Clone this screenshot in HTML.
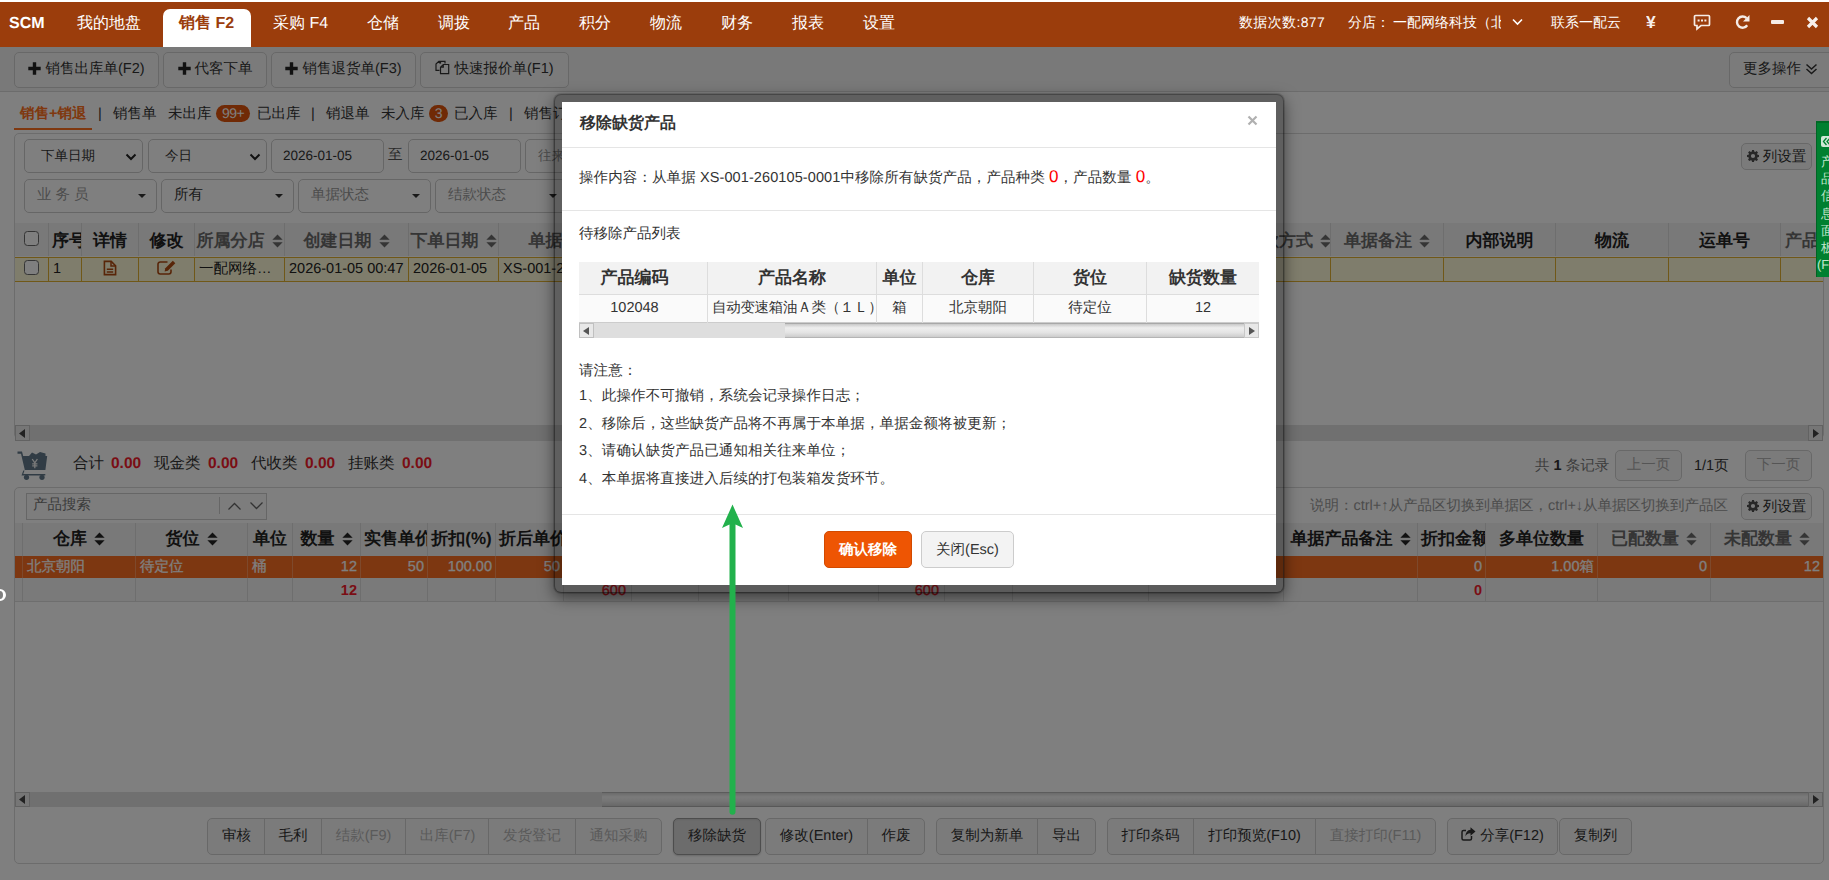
<!DOCTYPE html>
<html lang="zh">
<head>
<meta charset="utf-8">
<title>SCM</title>
<style>
*{box-sizing:border-box;margin:0;padding:0}
html,body{width:1829px;height:880px;overflow:hidden;background:#fff}
body{font-family:"Liberation Sans",sans-serif;font-size:14.500px;color:#333;position:relative;text-rendering:geometricPrecision}
.abs{position:absolute}
.t{position:absolute;white-space:nowrap;line-height:20px}
#hdr{position:absolute;left:0;top:0;width:1829px;height:47px;background:#9b3d0c;border-top:2px solid #fff;z-index:30}
#hdr .t{color:#fff;font-size:16px;line-height:20px}
#seltab{position:absolute;left:163px;top:7px;width:88px;height:38px;background:#fff;border-radius:7px 7px 0 0}
#page{position:absolute;left:0;top:0;width:1829px;height:880px;background:#fff;z-index:1;overflow:hidden}
#overlay{position:absolute;left:0;top:0;width:1829px;height:880px;background:rgba(0,0,0,.5);z-index:20}
.btn{position:absolute;height:36px;line-height:33px;border:1px solid #d0d0d0;border-radius:5px;background:#f7f7f7;color:#333;font-size:14.500px;text-align:center;white-space:nowrap;overflow:hidden}
.ctl{position:absolute;height:34px;line-height:32px;border:1px solid #ccc;border-radius:5px;background:#fff;color:#333;font-size:13.500px;padding-left:16px;white-space:nowrap;overflow:hidden}
.badge{position:absolute;height:17px;line-height:17px;border-radius:9px;background:#e0550c;color:#fff;font-size:14px;text-align:center;letter-spacing:-.5px}
.th{position:absolute;text-align:center;font-weight:bold;font-size:17px;white-space:nowrap;overflow:hidden}
.td{position:absolute;font-size:14.500px;white-space:nowrap;overflow:hidden;color:#222}
.red{color:#f00;font-size:17px}
#modal{position:absolute;left:554px;top:94px;width:730px;height:499px;border:8px solid rgba(0,0,0,.25);border-radius:7px;background:#fff;background-clip:padding-box;z-index:40;box-shadow:0 0 0 1px rgba(0,0,0,.13),0 5px 15px rgba(0,0,0,.5)}
#green{position:absolute;left:1816px;top:121px;width:13px;height:156px;background:#008030;border-left:1.500px solid #006424;border-top:2px solid #006a26;z-index:35;color:#cfe;font-size:13px;line-height:19px;overflow:hidden}
</style>
</head>
<body>
<div id="page">
<div class="abs" style="left:0px;top:47px;width:1829px;height:44px;background:#f2f2f2"></div>
<div class="abs" style="left:0px;top:91px;width:1829px;height:1px;background:#d8d8d8"></div>
<div class="btn" style="left:14px;top:52px;width:145px;height:36px;line-height:33px;"><svg width="13" height="13" viewBox="0 0 13 13" style="vertical-align:-1.500px;margin-right:4px"><path d="M4.800 0.300h3.400v4.500h4.500v3.400H8.200v4.500H4.800V8.200H0.300V4.800H4.800z" fill="#222"/></svg>销售出库单(F2)</div>
<div class="btn" style="left:163px;top:52px;width:104px;height:36px;line-height:33px;"><svg width="13" height="13" viewBox="0 0 13 13" style="vertical-align:-1.500px;margin-right:4px"><path d="M4.800 0.300h3.400v4.500h4.500v3.400H8.200v4.500H4.800V8.200H0.300V4.800H4.800z" fill="#222"/></svg>代客下单</div>
<div class="btn" style="left:271px;top:52px;width:145px;height:36px;line-height:33px;"><svg width="13" height="13" viewBox="0 0 13 13" style="vertical-align:-1.500px;margin-right:4px"><path d="M4.800 0.300h3.400v4.500h4.500v3.400H8.200v4.500H4.800V8.200H0.300V4.800H4.800z" fill="#222"/></svg>销售退货单(F3)</div>
<div class="btn" style="left:420px;top:52px;width:149px;height:36px;line-height:33px;"><svg width="15" height="15" viewBox="0 0 15 15" style="vertical-align:-2px;margin-right:4px"><path d="M5.500 3.500V1.300h4.500l0 0v2.200M5.500 3.500L3.200 1.300M5.500 1.300H3.800L1 4v6.300h3.500" fill="none" stroke="#333" stroke-width="1.200"/><path d="M8.300 4.500h5.400v9.200H5.500V7.200zM8.300 4.500v2.700H5.500" fill="none" stroke="#333" stroke-width="1.200"/></svg>快速报价单(F1)</div>
<div class="btn" style="left:1729px;top:52px;width:112px;height:36px;line-height:33px;text-align:left;padding-left:13px">更多操作 <svg width="13" height="12" viewBox="0 0 13 12" style="vertical-align:-2px"><path d="M1.500 1.500L6.500 6L11.500 1.500M1.500 6L6.500 10.500L11.500 6" fill="none" stroke="#333" stroke-width="1.500"/></svg></div>
<div class="t" style="left:20px;top:104px;color:#ff7020;font-weight:bold">销售+销退</div>
<div class="abs" style="left:14px;top:128px;width:78px;height:2px;background:#ff7020"></div>
<div class="t" style="left:98px;top:104px;">|</div>
<div class="t" style="left:113px;top:104px;">销售单</div>
<div class="t" style="left:168px;top:104px;">未出库</div>
<div class="badge" style="left:216px;top:105px;width:34px">99+</div>
<div class="t" style="left:257px;top:104px;">已出库</div>
<div class="t" style="left:311px;top:104px;">|</div>
<div class="t" style="left:326px;top:104px;">销退单</div>
<div class="t" style="left:381px;top:104px;">未入库</div>
<div class="badge" style="left:429px;top:105px;width:19px">3</div>
<div class="t" style="left:454px;top:104px;">已入库</div>
<div class="t" style="left:509px;top:104px;">|</div>
<div class="t" style="left:524px;top:104px;">销售订单</div>
<div class="abs" style="left:14px;top:133px;width:1810px;height:306px;border:1px solid #d8d8d8;border-radius:5px;background:#fff"></div>
<div class="ctl" style="left:24px;top:139px;width:119px;">下单日期<svg class="abs" style="right:5px;top:13px" width="12" height="8" viewBox="0 0 12 8"><path d="M1.500 1.500L6 6L10.500 1.500" fill="none" stroke="#222" stroke-width="2"/></svg></div>
<div class="ctl" style="left:148px;top:139px;width:119px;">今日<svg class="abs" style="right:5px;top:13px" width="12" height="8" viewBox="0 0 12 8"><path d="M1.500 1.500L6 6L10.500 1.500" fill="none" stroke="#222" stroke-width="2"/></svg></div>
<div class="ctl" style="left:271px;top:139px;width:113px;padding-left:11px">2026-01-05</div>
<div class="t" style="left:388px;top:145px;color:#555">至</div>
<div class="ctl" style="left:408px;top:139px;width:113px;padding-left:11px">2026-01-05</div>
<div class="ctl" style="left:525px;top:139px;width:160px;padding-left:12px;color:#999">往来单位</div>
<div class="ctl" style="left:24px;top:179px;width:133px;color:#999;font-size:14.500px;padding-left:12px;line-height:30px">业 务 员<svg class="abs" style="right:10px;top:14px" width="8" height="4" viewBox="0 0 8 4"><path d="M0 0h8L4 4z" fill="#333"/></svg></div>
<div class="ctl" style="left:161px;top:179px;width:133px;font-size:14.500px;padding-left:12px;line-height:30px">所有<svg class="abs" style="right:10px;top:14px" width="8" height="4" viewBox="0 0 8 4"><path d="M0 0h8L4 4z" fill="#333"/></svg></div>
<div class="ctl" style="left:298px;top:179px;width:133px;color:#999;font-size:14.500px;padding-left:12px;line-height:30px">单据状态<svg class="abs" style="right:10px;top:14px" width="8" height="4" viewBox="0 0 8 4"><path d="M0 0h8L4 4z" fill="#333"/></svg></div>
<div class="ctl" style="left:435px;top:179px;width:133px;color:#999;font-size:14.500px;padding-left:12px;line-height:30px">结款状态<svg class="abs" style="right:10px;top:14px" width="8" height="4" viewBox="0 0 8 4"><path d="M0 0h8L4 4z" fill="#333"/></svg></div>
<div class="btn" style="left:1741px;top:143px;width:71px;height:27px;line-height:24px;line-height:26.500px;"><svg width="12" height="12" viewBox="0 0 16 16" style="vertical-align:-1px;margin-right:4px"><path fill="#505050" fill-rule="evenodd" d="M6.700 0h2.600l.4 2.100 1.300.55 1.800-1.200 1.850 1.850-1.200 1.800.55 1.300 2.100.4v2.600l-2.100.4-.55 1.300 1.200 1.800-1.850 1.850-1.800-1.200-1.300.55-.4 2.100H6.700l-.4-2.100-1.300-.55-1.800 1.200-1.850-1.850 1.200-1.800-.55-1.300L0 9.300V6.700l2.100-.4.55-1.300-1.200-1.800L3.300 1.350l1.800 1.200 1.300-.55zM8 5.200a2.800 2.800 0 1 0 0 5.600 2.800 2.800 0 0 0 0-5.600z"/></svg>列设置</div>
<div class="abs" style="left:15px;top:223px;width:1808px;height:33px;background:#f2f2f2"></div>
<div class="th" style="left:15px;top:223px;width:33px;height:33px;line-height:35px;color:#222;text-align:center;"><span style="position:relative;top:-2px"><span style="display:inline-block;width:15px;height:15px;border:1.500px solid #6a6a6a;border-radius:3.500px;background:#fff;vertical-align:-2px;margin-left:-1px"></span></span></div>
<div class="th" style="left:48px;top:223px;width:33px;height:33px;line-height:35px;color:#222;text-align:center;border-left:1px solid #ddd;text-align:left;padding-left:3px;">序号</div>
<div class="th" style="left:81px;top:223px;width:57px;height:33px;line-height:35px;color:#222;text-align:center;border-left:1px solid #ddd;">详情</div>
<div class="th" style="left:138px;top:223px;width:56px;height:33px;line-height:35px;color:#222;text-align:center;border-left:1px solid #ddd;">修改</div>
<div class="th" style="left:194px;top:223px;width:90px;height:33px;line-height:35px;color:#6a6a6a;text-align:center;border-left:1px solid #ddd;">所属分店<svg width="11" height="14" viewBox="0 0 9 13" preserveAspectRatio="none" style="vertical-align:-1.500px;margin-left:7px"><path d="M4.500 0.500L8.700 5.300H0.300zM4.500 12.500L0.300 7.700H8.700z" fill="#6a6a6a"/></svg></div>
<div class="th" style="left:284px;top:223px;width:124px;height:33px;line-height:35px;color:#6a6a6a;text-align:center;border-left:1px solid #ddd;">创建日期<svg width="11" height="14" viewBox="0 0 9 13" preserveAspectRatio="none" style="vertical-align:-1.500px;margin-left:7px"><path d="M4.500 0.500L8.700 5.300H0.300zM4.500 12.500L0.300 7.700H8.700z" fill="#6a6a6a"/></svg></div>
<div class="th" style="left:408px;top:223px;width:90px;height:33px;line-height:35px;color:#6a6a6a;text-align:center;border-left:1px solid #ddd;">下单日期<svg width="11" height="14" viewBox="0 0 9 13" preserveAspectRatio="none" style="vertical-align:-1.500px;margin-left:7px"><path d="M4.500 0.500L8.700 5.300H0.300zM4.500 12.500L0.300 7.700H8.700z" fill="#6a6a6a"/></svg></div>
<div class="th" style="left:498px;top:223px;width:146px;height:33px;line-height:35px;color:#6a6a6a;text-align:center;border-left:1px solid #ddd;">单据编号<svg width="11" height="14" viewBox="0 0 9 13" preserveAspectRatio="none" style="vertical-align:-1.500px;margin-left:7px"><path d="M4.500 0.500L8.700 5.300H0.300zM4.500 12.500L0.300 7.700H8.700z" fill="#6a6a6a"/></svg></div>
<div class="th" style="left:644px;top:223px;width:78px;height:33px;line-height:35px;color:#6a6a6a;text-align:center;border-left:1px solid #ddd;">往来单位<svg width="11" height="14" viewBox="0 0 9 13" preserveAspectRatio="none" style="vertical-align:-1.500px;margin-left:7px"><path d="M4.500 0.500L8.700 5.300H0.300zM4.500 12.500L0.300 7.700H8.700z" fill="#6a6a6a"/></svg></div>
<div class="th" style="left:722px;top:223px;width:100px;height:33px;line-height:35px;color:#222;text-align:center;border-left:1px solid #ddd;">金额<svg width="11" height="14" viewBox="0 0 9 13" preserveAspectRatio="none" style="vertical-align:-1.500px;margin-left:7px"><path d="M4.500 0.500L8.700 5.300H0.300zM4.500 12.500L0.300 7.700H8.700z" fill="#222"/></svg></div>
<div class="th" style="left:822px;top:223px;width:100px;height:33px;line-height:35px;color:#222;text-align:center;border-left:1px solid #ddd;">已收<svg width="11" height="14" viewBox="0 0 9 13" preserveAspectRatio="none" style="vertical-align:-1.500px;margin-left:7px"><path d="M4.500 0.500L8.700 5.300H0.300zM4.500 12.500L0.300 7.700H8.700z" fill="#222"/></svg></div>
<div class="th" style="left:922px;top:223px;width:100px;height:33px;line-height:35px;color:#222;text-align:center;border-left:1px solid #ddd;">未收<svg width="11" height="14" viewBox="0 0 9 13" preserveAspectRatio="none" style="vertical-align:-1.500px;margin-left:7px"><path d="M4.500 0.500L8.700 5.300H0.300zM4.500 12.500L0.300 7.700H8.700z" fill="#222"/></svg></div>
<div class="th" style="left:1022px;top:223px;width:100px;height:33px;line-height:35px;color:#222;text-align:center;border-left:1px solid #ddd;">状态<svg width="11" height="14" viewBox="0 0 9 13" preserveAspectRatio="none" style="vertical-align:-1.500px;margin-left:7px"><path d="M4.500 0.500L8.700 5.300H0.300zM4.500 12.500L0.300 7.700H8.700z" fill="#222"/></svg></div>
<div class="th" style="left:1122px;top:223px;width:122px;height:33px;line-height:35px;color:#222;text-align:center;border-left:1px solid #ddd;">业务员<svg width="11" height="14" viewBox="0 0 9 13" preserveAspectRatio="none" style="vertical-align:-1.500px;margin-left:7px"><path d="M4.500 0.500L8.700 5.300H0.300zM4.500 12.500L0.300 7.700H8.700z" fill="#222"/></svg></div>
<div class="th" style="left:1244px;top:223px;width:86px;height:33px;line-height:35px;color:#6a6a6a;text-align:center;border-left:1px solid #ddd;">收款方式<svg width="11" height="14" viewBox="0 0 9 13" preserveAspectRatio="none" style="vertical-align:-1.500px;margin-left:7px"><path d="M4.500 0.500L8.700 5.300H0.300zM4.500 12.500L0.300 7.700H8.700z" fill="#6a6a6a"/></svg></div>
<div class="th" style="left:1330px;top:223px;width:113px;height:33px;line-height:35px;color:#6a6a6a;text-align:center;border-left:1px solid #ddd;">单据备注<svg width="11" height="14" viewBox="0 0 9 13" preserveAspectRatio="none" style="vertical-align:-1.500px;margin-left:7px"><path d="M4.500 0.500L8.700 5.300H0.300zM4.500 12.500L0.300 7.700H8.700z" fill="#6a6a6a"/></svg></div>
<div class="th" style="left:1443px;top:223px;width:112px;height:33px;line-height:35px;color:#222;text-align:center;border-left:1px solid #ddd;">内部说明</div>
<div class="th" style="left:1555px;top:223px;width:113px;height:33px;line-height:35px;color:#222;text-align:center;border-left:1px solid #ddd;">物流</div>
<div class="th" style="left:1668px;top:223px;width:112px;height:33px;line-height:35px;color:#222;text-align:center;border-left:1px solid #ddd;">运单号</div>
<div class="th" style="left:1780px;top:223px;width:60px;height:33px;line-height:35px;color:#6a6a6a;text-align:center;border-left:1px solid #ddd;text-align:left;padding-left:4px;width:42px;">产品</div>
<div class="abs" style="left:15px;top:257px;width:1808px;height:25px;background:#fffbd9;border-top:1px solid #e0b030;border-bottom:1px solid #e0b030"></div>
<div class="td" style="left:15px;top:257px;width:33px;height:25px;line-height:25px;text-align:center;"><span style="display:inline-block;width:15px;height:15px;border:1.500px solid #6a6a6a;border-radius:3.500px;background:#fff;vertical-align:-2px;margin-left:-1px"></span></div>
<div class="td" style="left:48px;top:257px;width:33px;height:25px;line-height:25px;text-align:left;border-left:1px solid #e0b030;padding-left:4px;">1</div>
<div class="td" style="left:81px;top:257px;width:57px;height:25px;line-height:25px;text-align:center;border-left:1px solid #e0b030;"><svg width="14" height="16" viewBox="0 0 14 16" style="vertical-align:-3px"><path d="M1.400 1.400h6.800l4.400 4.400v8.800H1.400z" fill="none" stroke="#b04a10" stroke-width="1.600"/><path d="M8 1.400v4.600h4.600" fill="none" stroke="#b04a10" stroke-width="1.500"/><path d="M3.800 9.300h6.400M3.800 12h6.400" stroke="#b04a10" stroke-width="1.500"/></svg></div>
<div class="td" style="left:138px;top:257px;width:56px;height:25px;line-height:25px;text-align:center;border-left:1px solid #e0b030;"><svg width="19" height="15" viewBox="0 0 19 15" style="vertical-align:-2px"><path d="M14 9.500v2.300a2.200 2.200 0 0 1-2.200 2.200H3.200A2.200 2.200 0 0 1 1 11.800V4.200A2.200 2.200 0 0 1 3.200 2h7.300" fill="none" stroke="#b04a10" stroke-width="1.600"/><path d="M7.600 11.400l0.700-3.200L15.800 0.700l2.500 2.500L10.800 10.700z" fill="#b04a10"/></svg></div>
<div class="td" style="left:194px;top:257px;width:90px;height:25px;line-height:25px;text-align:left;border-left:1px solid #e0b030;padding-left:4px;">一配网络…</div>
<div class="td" style="left:284px;top:257px;width:124px;height:25px;line-height:25px;text-align:left;border-left:1px solid #e0b030;padding-left:4px;">2026-01-05 00:47</div>
<div class="td" style="left:408px;top:257px;width:90px;height:25px;line-height:25px;text-align:left;border-left:1px solid #e0b030;padding-left:4px;">2026-01-05</div>
<div class="td" style="left:498px;top:257px;width:146px;height:25px;line-height:25px;text-align:left;border-left:1px solid #e0b030;padding-left:4px;">XS-001-260105-0001</div>
<div class="td" style="left:644px;top:257px;width:78px;height:25px;line-height:25px;text-align:left;border-left:1px solid #e0b030;padding-left:4px;"></div>
<div class="td" style="left:722px;top:257px;width:100px;height:25px;line-height:25px;text-align:left;border-left:1px solid #e0b030;padding-left:4px;"></div>
<div class="td" style="left:822px;top:257px;width:100px;height:25px;line-height:25px;text-align:left;border-left:1px solid #e0b030;padding-left:4px;"></div>
<div class="td" style="left:922px;top:257px;width:100px;height:25px;line-height:25px;text-align:left;border-left:1px solid #e0b030;padding-left:4px;"></div>
<div class="td" style="left:1022px;top:257px;width:100px;height:25px;line-height:25px;text-align:left;border-left:1px solid #e0b030;padding-left:4px;"></div>
<div class="td" style="left:1122px;top:257px;width:122px;height:25px;line-height:25px;text-align:left;border-left:1px solid #e0b030;padding-left:4px;"></div>
<div class="td" style="left:1244px;top:257px;width:86px;height:25px;line-height:25px;text-align:left;border-left:1px solid #e0b030;padding-left:4px;"></div>
<div class="td" style="left:1330px;top:257px;width:113px;height:25px;line-height:25px;text-align:left;border-left:1px solid #e0b030;padding-left:4px;"></div>
<div class="td" style="left:1443px;top:257px;width:112px;height:25px;line-height:25px;text-align:left;border-left:1px solid #e0b030;padding-left:4px;"></div>
<div class="td" style="left:1555px;top:257px;width:113px;height:25px;line-height:25px;text-align:left;border-left:1px solid #e0b030;padding-left:4px;"></div>
<div class="td" style="left:1668px;top:257px;width:112px;height:25px;line-height:25px;text-align:left;border-left:1px solid #e0b030;padding-left:4px;"></div>
<div class="td" style="left:1780px;top:257px;width:60px;height:25px;line-height:25px;text-align:left;border-left:1px solid #e0b030;padding-left:4px;width:43px;"></div>
<div class="abs" style="left:15px;top:425px;width:1808px;height:16px;background:#e0e0e0"></div>
<div class="abs" style="left:15px;top:425px;width:15px;height:16px;background:#ececec;border:1px solid #c4c4c4"></div>
<svg class="abs" style="left:19px;top:429px" width="6" height="9" viewBox="0 0 6 9"><path d="M6 0L0 4.500L6 9z" fill="#444"/></svg>
<div class="abs" style="left:1808px;top:425px;width:15px;height:16px;background:#ececec;border:1px solid #c4c4c4"></div>
<svg class="abs" style="left:1813px;top:429px" width="6" height="9" viewBox="0 0 6 9"><path d="M0 0L6 4.500L0 9z" fill="#444"/></svg>
<svg class="abs" style="left:17px;top:450px" width="31" height="30" viewBox="0 0 31 30"><path d="M0.500 1.500h4.500l1.200 4.500h24l-1.800 14H7.800L4 3.800H0.500z" fill="#62798a"/><path d="M12 6l3-3.500 4 2 4-2.500 5.500 1.500V6z" fill="#62798a"/><path d="M7.500 20.500l-1.200 3.500h22v1.500H4.500l1.800-5z" fill="#62798a"/><circle cx="9.500" cy="27.300" r="2.600" fill="#62798a"/><circle cx="25" cy="27.300" r="2.600" fill="#62798a"/><path d="M15.200 9l2.600 3.800L20.400 9M17.800 12.800v5.500M15.200 13.800h5.200M15.200 15.900h5.200" stroke="#f4f4f4" stroke-width="1.300" fill="none"/></svg>
<div class="t" style="left:73px;top:454px;font-size:15.500px;">合计</div>
<div class="t" style="left:111px;top:454px;font-size:15.500px;font-weight:bold;color:#f41a2a;">0.00</div>
<div class="t" style="left:154px;top:454px;font-size:15.500px;">现金类</div>
<div class="t" style="left:208px;top:454px;font-size:15.500px;font-weight:bold;color:#f41a2a;">0.00</div>
<div class="t" style="left:251px;top:454px;font-size:15.500px;">代收类</div>
<div class="t" style="left:305px;top:454px;font-size:15.500px;font-weight:bold;color:#f41a2a;">0.00</div>
<div class="t" style="left:348px;top:454px;font-size:15.500px;">挂账类</div>
<div class="t" style="left:402px;top:454px;font-size:15.500px;font-weight:bold;color:#f41a2a;">0.00</div>
<div class="t" style="left:1535px;top:456px;color:#777;font-size:14.500px">共 <b style="color:#333">1</b> 条记录</div>
<div class="btn" style="left:1615px;top:450px;width:67px;height:31px;line-height:28px;color:#aaa;background:#f6f6f6">上一页</div>
<div class="t" style="left:1694px;top:456px;color:#333;font-size:14.500px">1/1页</div>
<div class="btn" style="left:1745px;top:450px;width:67px;height:31px;line-height:28px;color:#aaa;background:#f6f6f6">下一页</div>
<div class="abs" style="left:14px;top:487px;width:1810px;height:377px;border:1px solid #d8d8d8;border-radius:5px;background:#fff"></div>
<div class="abs" style="left:26px;top:493px;width:241px;height:27px;border:1px solid #ccc;background:#fbfbfb"></div>
<div class="t" style="left:33px;top:495px;color:#777;font-size:14.500px">产品搜索</div>
<div class="abs" style="left:219px;top:497px;width:1px;height:17px;background:#ccc"></div>
<svg class="abs" style="left:228px;top:502px" width="13" height="8" viewBox="0 0 13 8"><path d="M0.500 7.500L6.500 1.500L12.500 7.500" fill="none" stroke="#666" stroke-width="1.300"/></svg>
<svg class="abs" style="left:250px;top:502px" width="13" height="8" viewBox="0 0 13 8"><path d="M0.500 0.500L6.500 6.500L12.500 0.500" fill="none" stroke="#666" stroke-width="1.300"/></svg>
<div class="t" style="left:1310px;top:496px;color:#999;font-size:14.500px">说明：ctrl+↑从产品区切换到单据区，ctrl+↓从单据区切换到产品区</div>
<div class="btn" style="left:1741px;top:493px;width:71px;height:27px;line-height:24px;line-height:26.500px;"><svg width="12" height="12" viewBox="0 0 16 16" style="vertical-align:-1px;margin-right:4px"><path fill="#505050" fill-rule="evenodd" d="M6.700 0h2.600l.4 2.100 1.300.55 1.800-1.200 1.850 1.850-1.200 1.800.55 1.300 2.100.4v2.600l-2.100.4-.55 1.300 1.200 1.800-1.850 1.850-1.800-1.200-1.300.55-.4 2.100H6.700l-.4-2.100-1.300-.55-1.800 1.200-1.850-1.850 1.200-1.800-.55-1.300L0 9.300V6.700l2.100-.4.55-1.300-1.200-1.800L3.300 1.350l1.800 1.200 1.300-.55zM8 5.200a2.800 2.800 0 1 0 0 5.600 2.800 2.800 0 0 0 0-5.600z"/></svg>列设置</div>
<div class="abs" style="left:15px;top:523px;width:1808px;height:33px;background:#f2f2f2"></div>
<div class="th" style="left:15px;top:523px;width:7px;height:33px;line-height:31px;color:#222;text-align:center;"></div>
<div class="th" style="left:22px;top:523px;width:113px;height:33px;line-height:31px;color:#222;text-align:center;border-left:1px solid #ddd;">仓库<svg width="11" height="14" viewBox="0 0 9 13" preserveAspectRatio="none" style="vertical-align:-1.500px;margin-left:7px"><path d="M4.500 0.500L8.700 5.300H0.300zM4.500 12.500L0.300 7.700H8.700z" fill="#222"/></svg></div>
<div class="th" style="left:135px;top:523px;width:112px;height:33px;line-height:31px;color:#222;text-align:center;border-left:1px solid #ddd;">货位<svg width="11" height="14" viewBox="0 0 9 13" preserveAspectRatio="none" style="vertical-align:-1.500px;margin-left:7px"><path d="M4.500 0.500L8.700 5.300H0.300zM4.500 12.500L0.300 7.700H8.700z" fill="#222"/></svg></div>
<div class="th" style="left:247px;top:523px;width:45px;height:33px;line-height:31px;color:#222;text-align:center;border-left:1px solid #ddd;">单位</div>
<div class="th" style="left:292px;top:523px;width:68px;height:33px;line-height:31px;color:#222;text-align:center;border-left:1px solid #ddd;">数量<svg width="11" height="14" viewBox="0 0 9 13" preserveAspectRatio="none" style="vertical-align:-1.500px;margin-left:7px"><path d="M4.500 0.500L8.700 5.300H0.300zM4.500 12.500L0.300 7.700H8.700z" fill="#222"/></svg></div>
<div class="th" style="left:360px;top:523px;width:67px;height:33px;line-height:31px;color:#222;text-align:center;border-left:1px solid #ddd;text-align:left;padding-left:3px;">实售单价</div>
<div class="th" style="left:427px;top:523px;width:68px;height:33px;line-height:31px;color:#222;text-align:center;border-left:1px solid #ddd;">折扣(%)</div>
<div class="th" style="left:495px;top:523px;width:68px;height:33px;line-height:31px;color:#222;text-align:center;border-left:1px solid #ddd;text-align:left;padding-left:3px;">折后单价</div>
<div class="th" style="left:563px;top:523px;width:68px;height:33px;line-height:31px;color:#222;text-align:center;border-left:1px solid #ddd;">金额</div>
<div class="th" style="left:631px;top:523px;width:67px;height:33px;line-height:31px;color:#222;text-align:center;border-left:1px solid #ddd;">成本</div>
<div class="th" style="left:698px;top:523px;width:90px;height:33px;line-height:31px;color:#222;text-align:center;border-left:1px solid #ddd;">产品编码<svg width="11" height="14" viewBox="0 0 9 13" preserveAspectRatio="none" style="vertical-align:-1.500px;margin-left:7px"><path d="M4.500 0.500L8.700 5.300H0.300zM4.500 12.500L0.300 7.700H8.700z" fill="#222"/></svg></div>
<div class="th" style="left:788px;top:523px;width:90px;height:33px;line-height:31px;color:#222;text-align:center;border-left:1px solid #ddd;">库存</div>
<div class="th" style="left:878px;top:523px;width:66px;height:33px;line-height:31px;color:#222;text-align:center;border-left:1px solid #ddd;">折后金额</div>
<div class="th" style="left:944px;top:523px;width:68px;height:33px;line-height:31px;color:#222;text-align:center;border-left:1px solid #ddd;">规格</div>
<div class="th" style="left:1012px;top:523px;width:136px;height:33px;line-height:31px;color:#222;text-align:center;border-left:1px solid #ddd;">产地<svg width="11" height="14" viewBox="0 0 9 13" preserveAspectRatio="none" style="vertical-align:-1.500px;margin-left:7px"><path d="M4.500 0.500L8.700 5.300H0.300zM4.500 12.500L0.300 7.700H8.700z" fill="#222"/></svg></div>
<div class="th" style="left:1148px;top:523px;width:135px;height:33px;line-height:31px;color:#222;text-align:center;border-left:1px solid #ddd;">品牌<svg width="11" height="14" viewBox="0 0 9 13" preserveAspectRatio="none" style="vertical-align:-1.500px;margin-left:7px"><path d="M4.500 0.500L8.700 5.300H0.300zM4.500 12.500L0.300 7.700H8.700z" fill="#222"/></svg></div>
<div class="th" style="left:1283px;top:523px;width:134px;height:33px;line-height:31px;color:#222;text-align:center;border-left:1px solid #ddd;">单据产品备注<svg width="11" height="14" viewBox="0 0 9 13" preserveAspectRatio="none" style="vertical-align:-1.500px;margin-left:7px"><path d="M4.500 0.500L8.700 5.300H0.300zM4.500 12.500L0.300 7.700H8.700z" fill="#222"/></svg></div>
<div class="th" style="left:1417px;top:523px;width:68px;height:33px;line-height:31px;color:#222;text-align:center;border-left:1px solid #ddd;text-align:left;padding-left:3px;">折扣金额</div>
<div class="th" style="left:1485px;top:523px;width:112px;height:33px;line-height:31px;color:#222;text-align:center;border-left:1px solid #ddd;">多单位数量</div>
<div class="th" style="left:1597px;top:523px;width:113px;height:33px;line-height:31px;color:#6a6a6a;text-align:center;border-left:1px solid #ddd;">已配数量<svg width="11" height="14" viewBox="0 0 9 13" preserveAspectRatio="none" style="vertical-align:-1.500px;margin-left:7px"><path d="M4.500 0.500L8.700 5.300H0.300zM4.500 12.500L0.300 7.700H8.700z" fill="#6a6a6a"/></svg></div>
<div class="th" style="left:1710px;top:523px;width:113px;height:33px;line-height:31px;color:#6a6a6a;text-align:center;border-left:1px solid #ddd;">未配数量<svg width="11" height="14" viewBox="0 0 9 13" preserveAspectRatio="none" style="vertical-align:-1.500px;margin-left:7px"><path d="M4.500 0.500L8.700 5.300H0.300zM4.500 12.500L0.300 7.700H8.700z" fill="#6a6a6a"/></svg></div>
<div class="abs" style="left:15px;top:556px;width:1808px;height:22px;background:#fb6e22"></div>
<div class="td" style="left:15px;top:556px;width:7px;height:22px;line-height:22px;text-align:left;color:#fff;padding-left:4px;"></div>
<div class="td" style="left:22px;top:556px;width:113px;height:22px;line-height:22px;text-align:left;border-left:1px solid rgba(255,255,255,.25);color:#fff;-webkit-text-stroke:.25px #fff;padding-left:4px;">北京朝阳</div>
<div class="td" style="left:135px;top:556px;width:112px;height:22px;line-height:22px;text-align:left;border-left:1px solid rgba(255,255,255,.25);color:#fff;-webkit-text-stroke:.25px #fff;padding-left:4px;">待定位</div>
<div class="td" style="left:247px;top:556px;width:45px;height:22px;line-height:22px;text-align:left;border-left:1px solid rgba(255,255,255,.25);color:#fff;-webkit-text-stroke:.25px #fff;padding-left:4px;">桶</div>
<div class="td" style="left:292px;top:556px;width:68px;height:22px;line-height:22px;text-align:right;border-left:1px solid rgba(255,255,255,.25);color:#fff;-webkit-text-stroke:.25px #fff;padding-right:3px;">12</div>
<div class="td" style="left:360px;top:556px;width:67px;height:22px;line-height:22px;text-align:right;border-left:1px solid rgba(255,255,255,.25);color:#fff;-webkit-text-stroke:.25px #fff;padding-right:3px;">50</div>
<div class="td" style="left:427px;top:556px;width:68px;height:22px;line-height:22px;text-align:right;border-left:1px solid rgba(255,255,255,.25);color:#fff;-webkit-text-stroke:.25px #fff;padding-right:3px;">100.00</div>
<div class="td" style="left:495px;top:556px;width:68px;height:22px;line-height:22px;text-align:right;border-left:1px solid rgba(255,255,255,.25);color:#fff;-webkit-text-stroke:.25px #fff;padding-right:3px;">50</div>
<div class="td" style="left:563px;top:556px;width:68px;height:22px;line-height:22px;text-align:right;border-left:1px solid rgba(255,255,255,.25);color:#fff;-webkit-text-stroke:.25px #fff;padding-right:3px;">600</div>
<div class="td" style="left:631px;top:556px;width:67px;height:22px;line-height:22px;text-align:left;border-left:1px solid rgba(255,255,255,.25);color:#fff;-webkit-text-stroke:.25px #fff;padding-left:4px;"></div>
<div class="td" style="left:698px;top:556px;width:90px;height:22px;line-height:22px;text-align:left;border-left:1px solid rgba(255,255,255,.25);color:#fff;-webkit-text-stroke:.25px #fff;padding-left:4px;"></div>
<div class="td" style="left:788px;top:556px;width:90px;height:22px;line-height:22px;text-align:left;border-left:1px solid rgba(255,255,255,.25);color:#fff;-webkit-text-stroke:.25px #fff;padding-left:4px;"></div>
<div class="td" style="left:878px;top:556px;width:66px;height:22px;line-height:22px;text-align:right;border-left:1px solid rgba(255,255,255,.25);color:#fff;-webkit-text-stroke:.25px #fff;padding-right:3px;">600</div>
<div class="td" style="left:944px;top:556px;width:68px;height:22px;line-height:22px;text-align:left;border-left:1px solid rgba(255,255,255,.25);color:#fff;-webkit-text-stroke:.25px #fff;padding-left:4px;"></div>
<div class="td" style="left:1012px;top:556px;width:136px;height:22px;line-height:22px;text-align:left;border-left:1px solid rgba(255,255,255,.25);color:#fff;-webkit-text-stroke:.25px #fff;padding-left:4px;"></div>
<div class="td" style="left:1148px;top:556px;width:135px;height:22px;line-height:22px;text-align:left;border-left:1px solid rgba(255,255,255,.25);color:#fff;-webkit-text-stroke:.25px #fff;padding-left:4px;"></div>
<div class="td" style="left:1283px;top:556px;width:134px;height:22px;line-height:22px;text-align:left;border-left:1px solid rgba(255,255,255,.25);color:#fff;-webkit-text-stroke:.25px #fff;padding-left:4px;"></div>
<div class="td" style="left:1417px;top:556px;width:68px;height:22px;line-height:22px;text-align:right;border-left:1px solid rgba(255,255,255,.25);color:#fff;-webkit-text-stroke:.25px #fff;padding-right:3px;">0</div>
<div class="td" style="left:1485px;top:556px;width:112px;height:22px;line-height:22px;text-align:right;border-left:1px solid rgba(255,255,255,.25);color:#fff;-webkit-text-stroke:.25px #fff;padding-right:3px;">1.00箱</div>
<div class="td" style="left:1597px;top:556px;width:113px;height:22px;line-height:22px;text-align:right;border-left:1px solid rgba(255,255,255,.25);color:#fff;-webkit-text-stroke:.25px #fff;padding-right:3px;">0</div>
<div class="td" style="left:1710px;top:556px;width:113px;height:22px;line-height:22px;text-align:right;border-left:1px solid rgba(255,255,255,.25);color:#fff;-webkit-text-stroke:.25px #fff;padding-right:3px;">12</div>
<div class="abs" style="left:15px;top:578px;width:1808px;height:24px;background:#f4f4f4;border-bottom:1px solid #ddd"></div>
<div class="td" style="left:15px;top:578px;width:7px;height:23px;line-height:23px;text-align:right;padding-right:3px;font-weight:bold;color:#f41a2a;line-height:26px;"></div>
<div class="td" style="left:22px;top:578px;width:113px;height:23px;line-height:23px;text-align:right;border-left:1px solid #ddd;padding-right:3px;font-weight:bold;color:#f41a2a;line-height:26px;"></div>
<div class="td" style="left:135px;top:578px;width:112px;height:23px;line-height:23px;text-align:right;border-left:1px solid #ddd;padding-right:3px;font-weight:bold;color:#f41a2a;line-height:26px;"></div>
<div class="td" style="left:247px;top:578px;width:45px;height:23px;line-height:23px;text-align:right;border-left:1px solid #ddd;padding-right:3px;font-weight:bold;color:#f41a2a;line-height:26px;"></div>
<div class="td" style="left:292px;top:578px;width:68px;height:23px;line-height:23px;text-align:right;border-left:1px solid #ddd;padding-right:3px;font-weight:bold;color:#f41a2a;line-height:26px;">12</div>
<div class="td" style="left:360px;top:578px;width:67px;height:23px;line-height:23px;text-align:right;border-left:1px solid #ddd;padding-right:3px;font-weight:bold;color:#f41a2a;line-height:26px;"></div>
<div class="td" style="left:427px;top:578px;width:68px;height:23px;line-height:23px;text-align:right;border-left:1px solid #ddd;padding-right:3px;font-weight:bold;color:#f41a2a;line-height:26px;"></div>
<div class="td" style="left:495px;top:578px;width:68px;height:23px;line-height:23px;text-align:right;border-left:1px solid #ddd;padding-right:3px;font-weight:bold;color:#f41a2a;line-height:26px;"></div>
<div class="td" style="left:563px;top:578px;width:68px;height:23px;line-height:23px;text-align:right;border-left:1px solid #ddd;padding-right:3px;font-weight:bold;color:#f41a2a;line-height:26px;font-weight:normal;padding-right:5px;-webkit-text-stroke:.35px #f41a2a;">600</div>
<div class="td" style="left:631px;top:578px;width:67px;height:23px;line-height:23px;text-align:right;border-left:1px solid #ddd;padding-right:3px;font-weight:bold;color:#f41a2a;line-height:26px;"></div>
<div class="td" style="left:698px;top:578px;width:90px;height:23px;line-height:23px;text-align:right;border-left:1px solid #ddd;padding-right:3px;font-weight:bold;color:#f41a2a;line-height:26px;"></div>
<div class="td" style="left:788px;top:578px;width:90px;height:23px;line-height:23px;text-align:right;border-left:1px solid #ddd;padding-right:3px;font-weight:bold;color:#f41a2a;line-height:26px;"></div>
<div class="td" style="left:878px;top:578px;width:66px;height:23px;line-height:23px;text-align:right;border-left:1px solid #ddd;padding-right:3px;font-weight:bold;color:#f41a2a;line-height:26px;font-weight:normal;padding-right:5px;-webkit-text-stroke:.35px #f41a2a;">600</div>
<div class="td" style="left:944px;top:578px;width:68px;height:23px;line-height:23px;text-align:right;border-left:1px solid #ddd;padding-right:3px;font-weight:bold;color:#f41a2a;line-height:26px;"></div>
<div class="td" style="left:1012px;top:578px;width:136px;height:23px;line-height:23px;text-align:right;border-left:1px solid #ddd;padding-right:3px;font-weight:bold;color:#f41a2a;line-height:26px;"></div>
<div class="td" style="left:1148px;top:578px;width:135px;height:23px;line-height:23px;text-align:right;border-left:1px solid #ddd;padding-right:3px;font-weight:bold;color:#f41a2a;line-height:26px;"></div>
<div class="td" style="left:1283px;top:578px;width:134px;height:23px;line-height:23px;text-align:right;border-left:1px solid #ddd;padding-right:3px;font-weight:bold;color:#f41a2a;line-height:26px;"></div>
<div class="td" style="left:1417px;top:578px;width:68px;height:23px;line-height:23px;text-align:right;border-left:1px solid #ddd;padding-right:3px;font-weight:bold;color:#f41a2a;line-height:26px;">0</div>
<div class="td" style="left:1485px;top:578px;width:112px;height:23px;line-height:23px;text-align:right;border-left:1px solid #ddd;padding-right:3px;font-weight:bold;color:#f41a2a;line-height:26px;"></div>
<div class="td" style="left:1597px;top:578px;width:113px;height:23px;line-height:23px;text-align:right;border-left:1px solid #ddd;padding-right:3px;font-weight:bold;color:#f41a2a;line-height:26px;"></div>
<div class="td" style="left:1710px;top:578px;width:113px;height:23px;line-height:23px;text-align:right;border-left:1px solid #ddd;padding-right:3px;font-weight:bold;color:#f41a2a;line-height:26px;"></div>
<div class="abs" style="left:15px;top:792px;width:1808px;height:15px;background:#e0e0e0"></div>
<div class="abs" style="left:602px;top:792px;width:1206px;height:15px;background:linear-gradient(#d6d6d6,#f6f6f6 30%,#ececec 60%,#d0d0d0);border-top:1px solid #b8b8b8;border-bottom:1px solid #b0b0b0"></div>
<div class="abs" style="left:15px;top:792px;width:15px;height:15px;background:#ececec;border:1px solid #c4c4c4"></div>
<svg class="abs" style="left:19px;top:795px" width="6" height="9" viewBox="0 0 6 9"><path d="M6 0L0 4.500L6 9z" fill="#444"/></svg>
<div class="abs" style="left:1808px;top:792px;width:15px;height:15px;background:#ececec;border:1px solid #c4c4c4"></div>
<svg class="abs" style="left:1813px;top:795px" width="6" height="9" viewBox="0 0 6 9"><path d="M0 0L6 4.500L0 9z" fill="#444"/></svg>
<div class="btn" style="left:207px;top:818px;width:59px;height:37px;line-height:34px;border-radius:5px 0 0 5px;line-height:35px;">审核</div>
<div class="btn" style="left:264px;top:818px;width:58px;height:37px;line-height:34px;border-radius:0;line-height:35px;">毛利</div>
<div class="btn" style="left:321px;top:818px;width:85px;height:37px;line-height:34px;border-radius:0;color:#b5b5b5;line-height:35px;">结款(F9)</div>
<div class="btn" style="left:405px;top:818px;width:85px;height:37px;line-height:34px;border-radius:0;color:#b5b5b5;line-height:35px;">出库(F7)</div>
<div class="btn" style="left:488px;top:818px;width:88px;height:37px;line-height:34px;border-radius:0;color:#b5b5b5;line-height:35px;">发货登记</div>
<div class="btn" style="left:575px;top:818px;width:87px;height:37px;line-height:34px;border-radius:0 5px 5px 0;color:#b5b5b5;line-height:35px;">通知采购</div>
<div class="btn" style="left:673px;top:818px;width:88px;height:37px;line-height:34px;line-height:35px;background:#d9d9d9;border-color:#9a9a9a;box-shadow:inset 0 1px 2px rgba(0,0,0,.08),0 1px 2px rgba(0,0,0,.18)">移除缺货</div>
<div class="btn" style="left:765px;top:818px;width:103px;height:37px;line-height:34px;border-radius:5px 0 0 5px;line-height:35px;">修改(Enter)</div>
<div class="btn" style="left:867px;top:818px;width:58px;height:37px;line-height:34px;border-radius:0 5px 5px 0;line-height:35px;">作废</div>
<div class="btn" style="left:936px;top:818px;width:102px;height:37px;line-height:34px;border-radius:5px 0 0 5px;line-height:35px;">复制为新单</div>
<div class="btn" style="left:1037px;top:818px;width:59px;height:37px;line-height:34px;border-radius:0 5px 5px 0;line-height:35px;">导出</div>
<div class="btn" style="left:1107px;top:818px;width:87px;height:37px;line-height:34px;border-radius:5px 0 0 5px;line-height:35px;">打印条码</div>
<div class="btn" style="left:1193px;top:818px;width:123px;height:37px;line-height:34px;border-radius:0;line-height:35px;">打印预览(F10)</div>
<div class="btn" style="left:1315px;top:818px;width:121px;height:37px;line-height:34px;border-radius:0 5px 5px 0;color:#b5b5b5;line-height:35px;">直接打印(F11)</div>
<div class="btn" style="left:1447px;top:818px;width:111px;height:37px;line-height:34px;line-height:35px;"><svg width="15" height="14" viewBox="0 0 15 14" style="vertical-align:-1px;margin-right:4px"><path d="M10.500 9v2.500a1.500 1.500 0 0 1-1.500 1.500H2.500A1.500 1.500 0 0 1 1 11.500V5a1.500 1.500 0 0 1 1.500-1.500H5" fill="none" stroke="#333" stroke-width="1.500"/><path d="M9.500 0.300L14.500 4.500L9.500 8.700V6.200C6.500 6.200 5 7.500 4.500 9.500C4.500 5.500 6.500 3 9.500 2.800z" fill="#333"/></svg>分享(F12)</div>
<div class="btn" style="left:1559px;top:818px;width:73px;height:37px;line-height:34px;line-height:35px;">复制列</div>
</div>
<div id="overlay"></div>
<div id="hdr">
<div class="t" style="left:9px;top:12px;font-weight:bold">SCM</div>
<div class="t" style="left:77px;top:12px;">我的地盘</div>
<div id="seltab"></div>
<div class="t" style="left:179px;top:12px;font-weight:bold;color:#9b3d0c">销售 F2</div>
<div class="t" style="left:273px;top:12px;">采购 F4</div>
<div class="t" style="left:367px;top:12px;">仓储</div>
<div class="t" style="left:438px;top:12px;">调拨</div>
<div class="t" style="left:508px;top:12px;">产品</div>
<div class="t" style="left:579px;top:12px;">积分</div>
<div class="t" style="left:650px;top:12px;">物流</div>
<div class="t" style="left:721px;top:12px;">财务</div>
<div class="t" style="left:792px;top:12px;">报表</div>
<div class="t" style="left:863px;top:12px;">设置</div>
<div class="t" style="left:1239px;top:10px;font-size:14px;letter-spacing:.35px">数据次数:877</div>
<div class="t" style="left:1348px;top:10px;font-size:14px">分店：</div>
<div class="t" style="left:1393px;top:10px;font-size:14px;width:108px;overflow:hidden">一配网络科技（北京</div>
<svg class="abs" style="left:1512px;top:16px" width="11" height="8" viewBox="0 0 11 8"><path d="M1 1.500 L5.500 6 L10 1.500" fill="none" stroke="#fff" stroke-width="1.600"/></svg>
<div class="t" style="left:1551px;top:10px;font-size:14px">联系一配云</div>
<div class="t" style="left:1646px;top:10px;font-weight:bold;font-size:17.500px;opacity:.92">¥</div>
<svg class="abs" style="left:1693px;top:12px;opacity:.9" width="18" height="17" viewBox="0 0 18 17"><path d="M2.500 1.500h13a1 1 0 0 1 1 1v8a1 1 0 0 1-1 1H8l-4 3.500v-3.500H2.500a1 1 0 0 1-1-1v-8a1 1 0 0 1 1-1z" fill="none" stroke="#fff" stroke-width="1.700"/><rect x="4.600" y="5.500" width="2" height="2" fill="#fff"/><rect x="8" y="5.500" width="2" height="2" fill="#fff"/><rect x="11.400" y="5.500" width="2" height="2" fill="#fff"/></svg>
<svg class="abs" style="left:1734px;top:12px;opacity:.9" width="17" height="17" viewBox="0 0 17 17"><path d="M13.200 11.300A5.600 5.600 0 1 1 12.600 4.200" fill="none" stroke="#fff" stroke-width="2.400"/><path d="M15.500 1v6.500h-6.500z" fill="#fff"/></svg>
<div class="abs" style="left:1771px;top:18px;width:13px;height:4px;background:#fff;border-radius:1px;opacity:.9"></div>
<svg class="abs" style="left:1806px;top:14px;opacity:.92" width="13" height="13" viewBox="0 0 13 13"><path d="M2 2L11 11M11 2L2 11" stroke="#fff" stroke-width="3.200"/></svg>
</div>
<div id="green"><div class="abs" style="left:4px;top:13px;width:12px;height:11px;background:#cfe8d6;border-radius:2px"></div><svg class="abs" style="left:5px;top:14px" width="8" height="9" viewBox="0 0 8 9"><path d="M4.500 1L1.500 4.500L4.500 8M8 1L5 4.500L8 8" fill="none" stroke="#008030" stroke-width="1.300"/></svg><div class="abs" style="left:4px;top:30px;width:13px;white-space:normal;color:#bfe6cb;font-size:13px;line-height:17.200px">产品信息面板</div><div class="abs" style="left:0px;top:135px;font-size:13px;line-height:14px;color:#bfe6cb">(F</div></div>
<div id="modal">
<div class="t" style="left:18px;top:12px;font-size:16px;font-weight:bold;color:#333">移除缺货产品</div>
<svg class="abs" style="left:685px;top:13px" width="11" height="11" viewBox="0 0 11 11"><path d="M1.500 1.500L9.500 9.500M9.500 1.500L1.500 9.500" stroke="#b0b0b0" stroke-width="2.200"/></svg>
<div class="abs" style="left:0px;top:45px;width:714px;height:1px;background:#e5e5e5"></div>
<div class="t" style="left:17px;top:65px;font-size:14.500px;letter-spacing:.1px">操作内容：从单据 XS-001-260105-0001中移除所有缺货产品，产品种类 <span class="red">0</span>，产品数量 <span class="red">0</span>。</div>
<div class="abs" style="left:0px;top:108px;width:714px;height:1px;background:#e5e5e5"></div>
<div class="t" style="left:17px;top:122px;font-size:14.500px">待移除产品列表</div>
<div class="abs" style="left:17px;top:160px;width:680px;height:33px;background:#f2f2f2;border-bottom:1px solid #ddd"></div>
<div class="abs" style="left:17px;top:193px;width:680px;height:28px;background:#fafafa;border-bottom:1px solid #ccc"></div>
<div class="th" style="left:17px;top:160px;width:128px;height:33px;line-height:32px;font-size:17px;color:#333;padding-right:17px;">产品编码</div>
<div class="td" style="left:17px;top:193px;width:128px;height:28px;line-height:27px;font-size:14.500px;color:#333;text-align:center;padding-right:17px;">102048</div>
<div class="th" style="left:145px;top:160px;width:169px;height:33px;line-height:32px;font-size:17px;color:#333;border-left:1px solid #ddd;">产品名称</div>
<div class="td" style="left:145px;top:193px;width:169px;height:28px;line-height:27px;font-size:14.500px;color:#333;text-align:left;padding-left:4px;letter-spacing:-.3px;border-left:1px solid #ddd;">自动变速箱油Ａ类（１Ｌ）</div>
<div class="th" style="left:314px;top:160px;width:46px;height:33px;line-height:32px;font-size:17px;color:#333;border-left:1px solid #ddd;">单位</div>
<div class="td" style="left:314px;top:193px;width:46px;height:28px;line-height:27px;font-size:14.500px;color:#333;text-align:center;border-left:1px solid #ddd;">箱</div>
<div class="th" style="left:360px;top:160px;width:111px;height:33px;line-height:32px;font-size:17px;color:#333;border-left:1px solid #ddd;">仓库</div>
<div class="td" style="left:360px;top:193px;width:111px;height:28px;line-height:27px;font-size:14.500px;color:#333;text-align:center;border-left:1px solid #ddd;">北京朝阳</div>
<div class="th" style="left:471px;top:160px;width:113px;height:33px;line-height:32px;font-size:17px;color:#333;border-left:1px solid #ddd;">货位</div>
<div class="td" style="left:471px;top:193px;width:113px;height:28px;line-height:27px;font-size:14.500px;color:#333;text-align:center;border-left:1px solid #ddd;">待定位</div>
<div class="th" style="left:584px;top:160px;width:113px;height:33px;line-height:32px;font-size:17px;color:#333;border-left:1px solid #ddd;">缺货数量</div>
<div class="td" style="left:584px;top:193px;width:113px;height:28px;line-height:27px;font-size:14.500px;color:#333;text-align:center;border-left:1px solid #ddd;">12</div>
<div class="abs" style="left:17px;top:221px;width:680px;height:15px;background:linear-gradient(#c8c8c8,#eeeeee 30%,#e4e4e4 65%,#cccccc);border-top:1px solid #a8a8a8;border-bottom:1px solid #b4b4b4"></div>
<div class="abs" style="left:32px;top:221px;width:191px;height:15px;background:#dedede"></div>
<div class="abs" style="left:17px;top:221px;width:15px;height:15px;background:#e8e8e8;border:1px solid #c0c0c0"></div>
<svg class="abs" style="left:21px;top:225px" width="6" height="8" viewBox="0 0 6 8"><path d="M6 0L0 4L6 8z" fill="#555"/></svg>
<div class="abs" style="left:682px;top:221px;width:15px;height:15px;background:#e8e8e8;border:1px solid #c8c8c8"></div>
<svg class="abs" style="left:687px;top:225px" width="6" height="8" viewBox="0 0 6 8"><path d="M0 0L6 4L0 8z" fill="#555"/></svg>
<div class="t" style="left:17px;top:259px;font-size:14.500px;letter-spacing:.12px">请注意：</div>
<div class="t" style="left:17px;top:284px;font-size:14.500px;letter-spacing:.12px">1、此操作不可撤销，系统会记录操作日志；</div>
<div class="t" style="left:17px;top:312px;font-size:14.500px;letter-spacing:.12px">2、移除后，这些缺货产品将不再属于本单据，单据金额将被更新；</div>
<div class="t" style="left:17px;top:339px;font-size:14.500px;letter-spacing:.12px">3、请确认缺货产品已通知相关往来单位；</div>
<div class="t" style="left:17px;top:367px;font-size:14.500px;letter-spacing:.12px">4、本单据将直接进入后续的打包装箱发货环节。</div>
<div class="abs" style="left:0px;top:412px;width:714px;height:1px;background:#e5e5e5"></div>
<div class="btn" style="left:262px;top:429px;width:88px;height:37px;line-height:36px;background:#ee5503;border-color:#d24a00;color:#fff;font-weight:bold;font-size:14.500px">确认移除</div>
<div class="btn" style="left:359px;top:429px;width:93px;height:37px;line-height:36px;background:#f3f3f3;border-color:#ccc;color:#333;font-size:14.500px">关闭(Esc)</div>
</div>
<svg class="abs" style="left:714px;top:500px;z-index:60" width="36" height="320" viewBox="-0.500 0 36 320"><path d="M18 4.500L28.500 28L21 24.500V311.800a3 3 0 0 1-6 0V24.500L7.500 28z" fill="#22b14c"/></svg>
<div class="abs" style="left:-7px;top:588.500px;width:12.700px;height:12.500px;border:solid #fff;border-width:2.500px 3.600px;border-radius:50%;z-index:60"></div>
</body>
</html>
